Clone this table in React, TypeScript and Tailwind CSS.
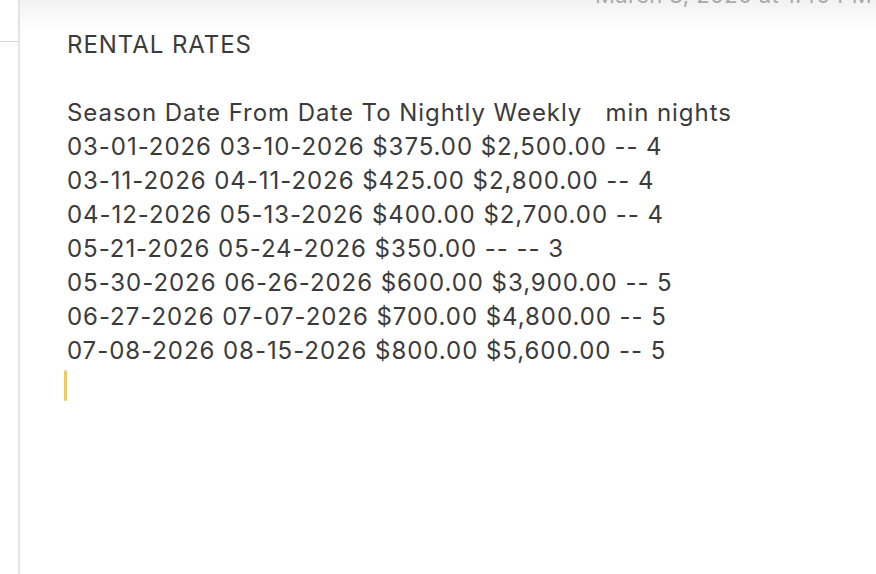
const rows = [
  'Season Date From Date To Nightly Weekly \u00a0 min nights',
  '03-01-2026 03-10-2026 $375.00 $2,500.00 -- 4',
  '03-11-2026 04-11-2026 $425.00 $2,800.00 -- 4',
  '04-12-2026 05-13-2026 $400.00 $2,700.00 -- 4',
  '05-21-2026 05-24-2026 $350.00 -- -- 3',
  '05-30-2026 06-26-2026 $600.00 $3,900.00 -- 5',
  '06-27-2026 07-07-2026 $700.00 $4,800.00 -- 5',
  '07-08-2026 08-15-2026 $800.00 $5,600.00 -- 5',
]

export default function App() {
  return (
    <div className="flex h-[574px] w-[876px] overflow-hidden bg-white font-['Inter',sans-serif]">
      {/* sidebar edge */}
      <div className="w-[20px] shrink-0 border-r-2 border-[#e3e3e3] pt-[41px]">
        <div className="h-px bg-[#d6d6d6]" />
      </div>

      {/* note */}
      <div className="flex-1 bg-gradient-to-b from-[#f2f2f2] via-white via-[30px] to-white">
        <div className="-mt-[17px] h-[24px] pl-[575px] text-[22px] leading-[24px] tracking-[0.4px] whitespace-nowrap text-[#a9a9a9]">
          March 8, 2026 at 1:40 PM
        </div>
        <div className="pt-[21px] pl-[47px] text-[24px] leading-[34px] tracking-[0.95px] text-[#3b3b3b]">
          <div>RENTAL RATES</div>
          <div>&nbsp;</div>
          {rows.map((r) => (
            <div key={r} className="whitespace-pre">{r}</div>
          ))}
          <div className="flex h-[34px] items-center">
            <div className="-ml-[3px] h-[31px] w-[3px] rounded-full bg-[#f2c867]" />
          </div>
        </div>
      </div>
    </div>
  )
}
